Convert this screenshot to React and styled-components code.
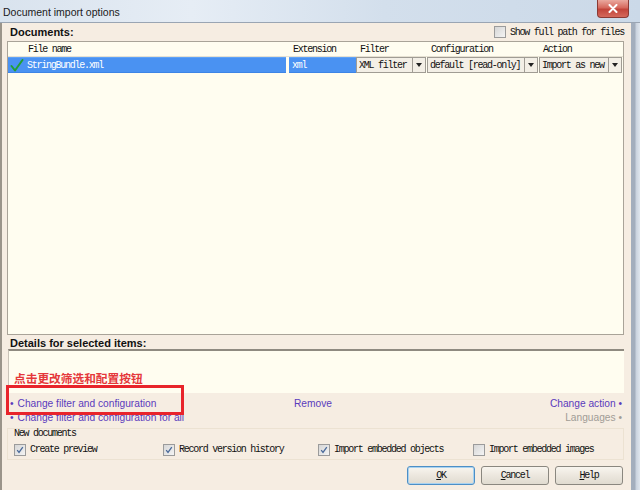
import React from "react";
import styled, { createGlobalStyle } from "styled-components";

const Global = createGlobalStyle`
  html, body { margin: 0; padding: 0; background: #f6ede2; }
  * { box-sizing: border-box; }
`;

const mono = `"Liberation Mono", "DejaVu Sans Mono", monospace`;
const sans = `"Liberation Sans", Arial, sans-serif`;

const Window = styled.div`
  position: relative;
  width: 640px;
  height: 490px;
  overflow: hidden;
  display: flex;
  flex-direction: column;
  background: #f6ede2;
`;

const TitleBar = styled.div`
  height: 23px;
  flex: none;
  display: flex;
  align-items: center;
  justify-content: space-between;
  padding-left: 3px;
  background: linear-gradient(90deg, #d9e3ee 0%, #e6edf5 30%, #d3dfec 60%, #cbd9e8 100%);
  border-bottom: 1px solid #9aa5b3;
  font-family: ${sans};
  font-size: 10.5px;
  color: #1a1a1a;
`;

const Title = styled.span`
  margin-top: 1px;
`;

const CloseButton = styled.div`
  align-self: flex-start;
  width: 32px;
  height: 18px;
  margin-right: 11px;
  border: 1px solid #8b3a34;
  border-top: none;
  border-radius: 0 0 4px 4px;
  background: linear-gradient(180deg, #eaa99f 0%, #d6695d 45%, #c2443a 55%, #d5695c 100%);
  display: flex;
  align-items: center;
  justify-content: center;
`;

const Body = styled.div`
  flex: 1;
  display: flex;
  min-height: 0;
`;

const Content = styled.div`
  flex: 1;
  display: flex;
  flex-direction: column;
  border-left: 2px solid #9a948a;
  padding: 0 7px 0 5px;
`;

const RightFrame = styled.div`
  width: 9px;
  flex: none;
  background: linear-gradient(90deg, #a3aebd 0px, #a3aebd 4px, #c9d2de 5px, #dfe6ee 9px);
`;

const DocHeader = styled.div`
  height: 18px;
  display: flex;
  align-items: center;
  justify-content: space-between;
  padding-left: 3px;
`;

const BoldLabel = styled.div`
  font-family: ${sans};
  font-weight: bold;
  font-size: 11px;
  color: #111;
`;

const CheckLabel = styled.label`
  display: flex;
  align-items: center;
  gap: 4px;
  font-family: ${mono};
  font-size: 10px;
  letter-spacing: -1.25px;
  color: #111;
  white-space: nowrap;
`;

const Box = styled.span`
  width: 12px;
  height: 12px;
  flex: none;
  border: 1px solid #9b9b9b;
  background: linear-gradient(135deg, #d6d6d6, #f4f4f4);
  display: inline-flex;
  align-items: center;
  justify-content: center;
`;

function Check({ checked, children }) {
  return (
    <CheckLabel>
      <Box>
        {checked && (
          <svg width="8" height="8" viewBox="0 0 8 8">
            <path d="M1.2 4.2 L3 6.4 L6.8 1.2" fill="none" stroke="#4a6a9a" strokeWidth="1.3" />
          </svg>
        )}
      </Box>
      {children}
    </CheckLabel>
  );
}

const Table = styled.div`
  height: 294px;
  flex: none;
  border: 1px solid #a9a398;
  background: #fffdf0;
  display: flex;
  flex-direction: column;
`;

const cols = "281px 67px 71px 112px 1fr";

const HeadRow = styled.div`
  height: 15px;
  display: grid;
  grid-template-columns: ${cols};
  border-bottom: 1px solid #e6e1d2;
  font-family: ${mono};
  font-size: 10px;
  letter-spacing: -1.25px;
  color: #111;
`;

const HeadCell = styled.div`
  display: flex;
  align-items: center;
  padding-left: ${(p) => p.$pad || 4}px;
`;

const DataRow = styled.div`
  height: 16px;
  display: grid;
  grid-template-columns: ${cols};
  font-family: ${mono};
  font-size: 10px;
  letter-spacing: -1.25px;
`;

const SelCell = styled.div`
  display: flex;
  align-items: center;
  gap: 3px;
  padding-left: ${(p) => p.$pad || 3}px;
  background: #4a92f2;
  color: #fff;
  margin-right: ${(p) => p.$gap || 0}px;
  border-top: 1px solid #5fa2f6;
  border-bottom: 1px solid #3d84e6;
`;

const Combo = styled.div`
  display: flex;
  margin-right: 1px;
  border: 1px solid #a09c94;
  background: #f3efe6;
  color: #111;
`;

const ComboText = styled.div`
  flex: 1;
  display: flex;
  align-items: center;
  padding-left: 2px;
  white-space: nowrap;
  overflow: hidden;
`;

const ComboArrow = styled.div`
  width: 13px;
  flex: none;
  border-left: 1px solid #a09c94;
  display: flex;
  align-items: center;
  justify-content: center;
  &::after {
    content: "";
    border-left: 3px solid transparent;
    border-right: 3px solid transparent;
    border-top: 4px solid #222;
  }
`;

const DetailsLabel = styled(BoldLabel)`
  height: 14px;
  display: flex;
  align-items: flex-end;
  padding-left: 3px;
`;

const DetailsBox = styled.div`
  height: 44px;
  flex: none;
  margin-left: 1px;
  background: #fffdf0;
  border-top: 2px solid #8f8a80;
  border-left: 1px solid #c9c3b8;
`;

const LinkRow = styled.div`
  height: ${(p) => p.$h}px;
  display: grid;
  grid-template-columns: 1fr 1fr 1fr;
  align-items: end;
  font-family: ${sans};
  font-size: 10.2px;
  padding: 0 2px 0 3px;
`;

const Link = styled.span`
  color: ${(p) => (p.$muted ? "#a19c96" : "#5a3bbd")};
  justify-self: ${(p) => p.$align || "start"};
  white-space: nowrap;
  line-height: 13px;
  margin-left: ${(p) => p.$ml || 0}px;
`;

const Bullet = styled.span`
  margin-right: 4px;
`;

const Group = styled.div`
  margin-top: 4px;
  height: 32px;
  flex: none;
  border: 1px solid #ece2d2;
  display: flex;
  flex-direction: column;
  padding: 0 0 0 6px;
`;

const GroupTitle = styled.div`
  font-family: ${mono};
  font-size: 10px;
  letter-spacing: -1.25px;
  color: #111;
  height: 12px;
  line-height: 10px;
  margin-top: 0px;
`;

const OptionsRow = styled.div`
  display: grid;
  grid-template-columns: 149px 155px 155px 1fr;
  align-items: center;
  height: 17px;
`;

const Buttons = styled.div`
  display: flex;
  justify-content: flex-end;
  gap: 6px;
  margin-top: 6px;
  padding-right: 1px;
`;

const Button = styled.div`
  width: 68px;
  height: 19px;
  border: 1px solid ${(p) => (p.$default ? "#4d8fc6" : "#8a877f")};
  border-radius: 3px;
  background: linear-gradient(180deg, #f8f5ef 0%, #ece7de 50%, #e0dbd0 100%);
  box-shadow: ${(p) => (p.$default ? "inset 0 0 0 1px #a9d2f0" : "none")};
  display: flex;
  align-items: center;
  justify-content: center;
  font-family: ${mono};
  font-size: 10px;
  letter-spacing: -1.25px;
  color: #111;
  & u { text-decoration: underline; }
`;

const Annotation = styled.div`
  position: absolute;
  left: 14px;
  top: 370px;
  font-family: "Noto Sans CJK SC", sans-serif;
  font-weight: bold;
  font-size: 11.7px;
  line-height: 16px;
  color: #e5383b;
`;

const Highlight = styled.div`
  position: absolute;
  left: 6px;
  top: 385px;
  width: 178px;
  height: 30px;
  border: 3px solid #e8242b;
`;

export default function App() {
  return (
    <>
      <Global />
      <Window>
        <TitleBar>
          <Title>Document import options</Title>
          <CloseButton>
            <svg width="10" height="9" viewBox="0 0 10 9">
              <path d="M1.5 1 L8.5 8 M8.5 1 L1.5 8" stroke="#fff" strokeWidth="2" strokeLinecap="round" />
            </svg>
          </CloseButton>
        </TitleBar>
        <Body>
          <Content>
            <DocHeader>
              <BoldLabel>Documents:</BoldLabel>
              <Check>Show full path for files</Check>
            </DocHeader>
            <Table>
              <HeadRow>
                <HeadCell $pad={20}>File name</HeadCell>
                <HeadCell>Extension</HeadCell>
                <HeadCell>Filter</HeadCell>
                <HeadCell>Configuration</HeadCell>
                <HeadCell>Action</HeadCell>
              </HeadRow>
              <DataRow>
                <SelCell $gap={3} $pad={2}>
                  <svg width="14" height="13" viewBox="0 0 14 13">
                    <path d="M1.5 7 L5 11.5 L12.5 1" fill="none" stroke="#23a032" strokeWidth="2" strokeLinecap="round" strokeLinejoin="round" />
                  </svg>
                  StringBundle.xml
                </SelCell>
                <SelCell>xml</SelCell>
                <Combo>
                  <ComboText>XML filter</ComboText>
                  <ComboArrow />
                </Combo>
                <Combo>
                  <ComboText>default [read-only]</ComboText>
                  <ComboArrow />
                </Combo>
                <Combo>
                  <ComboText>Import as new</ComboText>
                  <ComboArrow />
                </Combo>
              </DataRow>
            </Table>
            <DetailsLabel>Details for selected items:</DetailsLabel>
            <DetailsBox />
            <LinkRow $h={17}>
              <Link><Bullet>•</Bullet>Change filter and configuration</Link>
              <Link $ml={80}>Remove</Link>
              <Link $align="end">Change action •</Link>
            </LinkRow>
            <LinkRow $h={14}>
              <Link><Bullet>•</Bullet>Change filter and configuration for all</Link>
              <span />
              <Link $muted $align="end">Languages •</Link>
            </LinkRow>
            <Group>
              <GroupTitle>New documents</GroupTitle>
              <OptionsRow>
                <Check checked>Create preview</Check>
                <Check checked>Record version history</Check>
                <Check checked>Import embedded objects</Check>
                <Check>Import embedded images</Check>
              </OptionsRow>
            </Group>
            <Buttons>
              <Button $default><u>O</u>K</Button>
              <Button><u>C</u>ancel</Button>
              <Button><u>H</u>elp</Button>
            </Buttons>
          </Content>
          <RightFrame />
        </Body>
        <Annotation>点击更改筛选和配置按钮</Annotation>
        <Highlight />
      </Window>
    </>
  );
}
